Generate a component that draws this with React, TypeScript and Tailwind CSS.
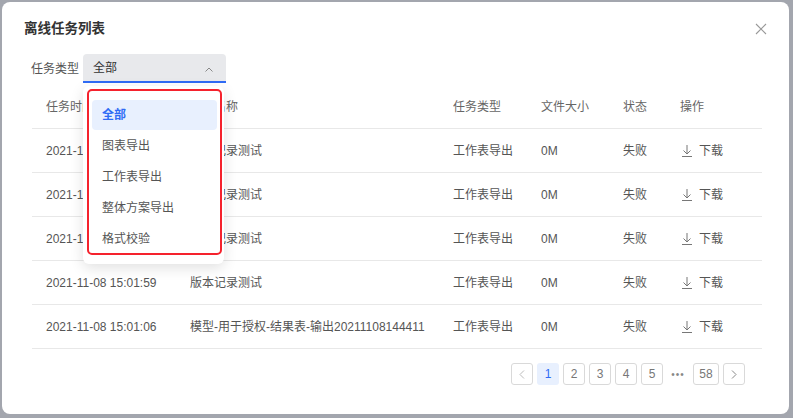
import React from "react";

const rows = [
  { time: "2021-11-08 15:03:12", name: "版本记录测试" },
  { time: "2021-11-08 15:02:47", name: "版本记录测试" },
  { time: "2021-11-08 15:02:20", name: "版本记录测试" },
  { time: "2021-11-08 15:01:59", name: "版本记录测试" },
  { time: "2021-11-08 15:01:06", name: "模型-用于授权-结果表-输出20211108144411" },
];

const options = ["全部", "图表导出", "工作表导出", "整体方案导出", "格式校验"];

function DownloadIcon() {
  return (
    <svg width="12" height="13" viewBox="0 0 12 13" fill="none" stroke="#777" strokeWidth="1">
      <path d="M6 1v9M2.5 6.5 6 10l3.5-3.5M1 12.5h10" />
    </svg>
  );
}

function PageBtn({ children, active, wide }: { children: React.ReactNode; active?: boolean; wide?: boolean }) {
  return (
    <button
      className={
        "h-[22px] rounded-[3px] flex items-center justify-center text-[12px] " +
        (wide ? "w-[26px] " : "w-[22px] ") +
        (active ? "bg-[#e8f0fe] text-[#2f6bf5]" : "border border-[#d9d9d9] text-[#777] bg-white")
      }
    >
      {children}
    </button>
  );
}

export default function App() {
  return (
    <div className="w-[793px] h-[418px] bg-[#a3a6ae] pt-[2px] pl-[2px] font-['Liberation_Sans','Noto_Sans_CJK_SC',sans-serif]">
      <div className="relative w-[787px] h-[412px] bg-white rounded-[8px]">
        {/* header */}
        <div className="flex items-center justify-between pl-[22px] pr-[22px] pt-[14px] h-[40px]">
          <h1 className="text-[13.5px] font-semibold text-[#333]">离线任务列表</h1>
          <svg width="12" height="12" viewBox="0 0 12 12" stroke="#999" strokeWidth="1.1">
            <path d="M1 1l10 10M11 1 1 11" />
          </svg>
        </div>

        {/* filter */}
        <div className="flex items-center pl-[29px] mt-[12px]">
          <span className="text-[12px] text-[#555] w-[52px]">任务类型</span>
          <div className="w-[143px] h-[29px] bg-[#e8e9ec] rounded-t-[4px] border-b-2 border-[#2f6bf5] flex items-center justify-between pl-[10px] pr-[13px]">
            <span className="text-[12px] text-[#333]">全部</span>
            <svg width="8" height="5" viewBox="0 0 8 5" fill="none" stroke="#888" strokeWidth="1" className="mt-[4px]">
              <path d="M0.5 4.5 4 1l3.5 3.5" />
            </svg>
          </div>
        </div>

        {/* table */}
        <div className="ml-[30px] mr-[27px] mt-[2px]">
          <div className="flex h-[44px] items-center border-b border-[#e8e8e8] text-[12px] text-[#666]">
            <div className="w-[144px] pl-[14px]">任务时间</div>
            <div className="w-[263px] pl-[14px]">任务名称</div>
            <div className="w-[88px] pl-[14px]">任务类型</div>
            <div className="w-[82px] pl-[14px]">文件大小</div>
            <div className="w-[57px] pl-[14px]">状态</div>
            <div className="flex-1 pl-[14px]">操作</div>
          </div>
          {rows.map((r, i) => (
            <div key={i} className="flex h-[44px] items-center border-b border-[#e8e8e8] text-[12px] text-[#555]">
              <div className="w-[144px] pl-[14px]">{r.time}</div>
              <div className="w-[263px] pl-[14px] whitespace-nowrap">{r.name}</div>
              <div className="w-[88px] pl-[14px]">工作表导出</div>
              <div className="w-[82px] pl-[14px]">0M</div>
              <div className="w-[57px] pl-[14px]">失败</div>
              <div className="flex-1 pl-[15px] flex items-center gap-[6px]">
                <DownloadIcon />
                <span>下载</span>
              </div>
            </div>
          ))}
        </div>

        {/* pagination */}
        <div className="flex justify-end items-center gap-[4px] mr-[44px] mt-[14px]">
          <PageBtn>
            <svg width="6" height="9" viewBox="0 0 6 9" fill="none" stroke="#bbb" strokeWidth="1">
              <path d="M5 0.5 1 4.5l4 4" />
            </svg>
          </PageBtn>
          <PageBtn active>1</PageBtn>
          <PageBtn>2</PageBtn>
          <PageBtn>3</PageBtn>
          <PageBtn>4</PageBtn>
          <PageBtn>5</PageBtn>
          <span className="w-[22px] text-center text-[10px] tracking-[1px] text-[#888]">•••</span>
          <PageBtn wide>58</PageBtn>
          <PageBtn>
            <svg width="6" height="9" viewBox="0 0 6 9" fill="none" stroke="#888" strokeWidth="1">
              <path d="M1 0.5 5 4.5l-4 4" />
            </svg>
          </PageBtn>
        </div>

        {/* dropdown overlay */}
        <div className="absolute left-[81px] top-[84px] w-[141px] h-[178px] bg-white rounded-[6px] shadow-[0_4px_14px_rgba(0,0,0,0.12)] p-[4px]">
          <div className="absolute left-[4px] top-[3px] w-[135px] h-[166px] border-[2.5px] border-[#f5222d] rounded-[5px]" />
          <div className="pt-[10px] pl-[5px] pr-[3px] flex flex-col">
            {options.map((o, i) => (
              <div
                key={o}
                className={
                  "h-[30px] mb-[1px] flex items-center pl-[10px] rounded-[4px] text-[12px] " +
                  (i === 0 ? "bg-[#e8f0fe] text-[#2f6bf5] font-semibold" : "text-[#555]")
                }
              >
                {o}
              </div>
            ))}
          </div>
        </div>
      </div>
    </div>
  );
}
